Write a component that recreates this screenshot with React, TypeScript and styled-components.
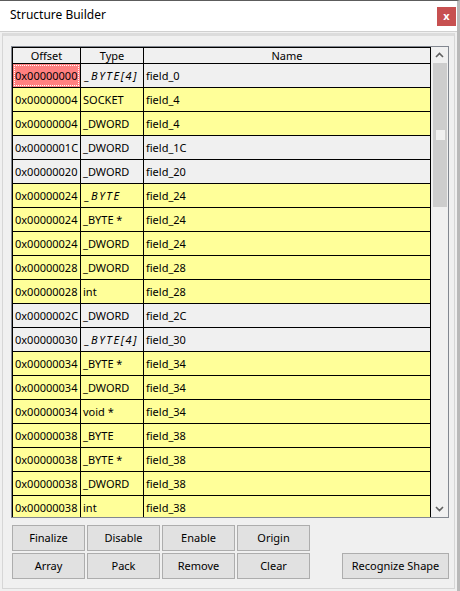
import React from "react";
import styled, { createGlobalStyle } from "styled-components";

const Global = createGlobalStyle`
  html, body { margin: 0; padding: 0; background: #f0f0f0; }
  body { font-family: "Noto Sans", "Segoe UI", sans-serif; font-size: 11px; color: #000; }
  * { box-sizing: border-box; }
`;

const Window = styled.div`
  width: 460px;
  height: 591px;
  display: flex;
  flex-direction: column;
  border-top: 1px solid #5c5c5c;
  border-right: 3px solid #b9b9b9;
  background: #f0f0f0;
  overflow: hidden;
`;

const TitleBar = styled.div`
  height: 31px;
  flex: none;
  background: #fff;
  display: flex;
  align-items: center;
  justify-content: space-between;
  padding: 0 1px 0 10px;
  font-size: 12px;
  border-bottom: 1px solid #d0d0d0;
`;

const Title = styled.span`
  margin-top: -3px;
`;

const CloseButton = styled.div`
  width: 19px;
  height: 19px;
  background: #c75050;
  color: #fff;
  font-weight: bold;
  font-size: 11px;
  display: flex;
  align-items: center;
  justify-content: center;
  margin-top: 1px;
  line-height: 1;
  padding-bottom: 2px;
`;

const Panel = styled.div`
  flex: 1;
  margin: 1px 2px 2px 2px;
  border: 1px solid #d6d6d6;
  border-top: 3px solid #dcdcdc;
  padding: 10px 4px 0 8px;
  display: flex;
  flex-direction: column;
  gap: 7px;
`;

const Frame = styled.div`
  width: 438px;
  height: 472px;
  border: 1px solid #828790;
  display: flex;
  background: #f0f0f0;
`;

const Grid = styled.div`
  flex: 1;
  border-left: 1px solid #000;
  border-top: 1px solid #000;
  overflow: hidden;
  display: flex;
  flex-direction: column;
`;

const Row = styled.div<{ $bg: string; $h: number }>`
  display: grid;
  grid-template-columns: 68px 63px 1fr;
  height: ${(p) => p.$h}px;
  flex: none;
  background: ${(p) => p.$bg};
  border-bottom: 1px solid #000;
`;

const HeadCell = styled.div`
  border-right: 1px solid #000;
  display: flex;
  align-items: center;
  justify-content: center;
  padding-bottom: 1px;
`;

const Cell = styled.div<{ $sel?: boolean; $italic?: boolean }>`
  border-right: 1px solid #000;
  display: flex;
  align-items: center;
  padding-left: ${(p) => (p.$italic ? 4 : 2)}px;
  white-space: nowrap;
  overflow: hidden;
  position: relative;
  background: ${(p) => (p.$sel ? "#ff8080" : "transparent")};
  font-style: ${(p) => (p.$italic ? "italic" : "normal")};
  letter-spacing: ${(p) => (p.$italic ? "1.6px" : "0")};
  ${(p) =>
    p.$sel &&
    `&::after {
      content: "";
      position: absolute;
      inset: 1px;
      border: 1px dotted #fff;
    }`}
`;

const ScrollBar = styled.div`
  width: 17px;
  flex: none;
  display: flex;
  flex-direction: column;
  background: #f0f0f0;
`;

const Arrow = styled.div`
  height: 16px;
  flex: none;
  display: flex;
  align-items: center;
  justify-content: center;
`;

const Track = styled.div`
  flex: 1;
  display: flex;
  flex-direction: column;
  padding: 0 1px 0 2px;
`;

const Thumb = styled.div`
  height: 144px;
  background: #cdcdcd;
  display: flex;
  justify-content: center;
  padding-top: 67px;
`;

const Grip = styled.div`
  width: 9px;
  height: 10px;
  background: #f0f0f0;
`;

const Buttons = styled.div`
  display: grid;
  grid-template-columns: 73px 73px 73px 73px 1fr;
  grid-template-rows: 26px 26px;
  column-gap: 2px;
  row-gap: 2px;
  width: 438px;
  padding-left: 1px;
`;

const Button = styled.button<{ $wide?: boolean }>`
  font-family: inherit;
  font-size: 11px;
  color: #000;
  background: #e1e1e1;
  border: 1px solid #adadad;
  padding: 0 0 1px 0;
  margin: 0;
  ${(p) => p.$wide && `grid-column: 5; grid-row: 2; width: 107px; justify-self: end;`}
`;

type R = { off: string; type: string; name: string; y: boolean; it?: boolean };

const rows: R[] = [
  { off: "0x00000000", type: "_BYTE[4]", name: "field_0", y: false, it: true },
  { off: "0x00000004", type: "SOCKET", name: "field_4", y: true },
  { off: "0x00000004", type: "_DWORD", name: "field_4", y: true },
  { off: "0x0000001C", type: "_DWORD", name: "field_1C", y: false },
  { off: "0x00000020", type: "_DWORD", name: "field_20", y: false },
  { off: "0x00000024", type: "_BYTE", name: "field_24", y: true, it: true },
  { off: "0x00000024", type: "_BYTE *", name: "field_24", y: true },
  { off: "0x00000024", type: "_DWORD", name: "field_24", y: true },
  { off: "0x00000028", type: "_DWORD", name: "field_28", y: true },
  { off: "0x00000028", type: "int", name: "field_28", y: true },
  { off: "0x0000002C", type: "_DWORD", name: "field_2C", y: false },
  { off: "0x00000030", type: "_BYTE[4]", name: "field_30", y: false, it: true },
  { off: "0x00000034", type: "_BYTE *", name: "field_34", y: true },
  { off: "0x00000034", type: "_DWORD", name: "field_34", y: true },
  { off: "0x00000034", type: "void *", name: "field_34", y: true },
  { off: "0x00000038", type: "_BYTE", name: "field_38", y: true },
  { off: "0x00000038", type: "_BYTE *", name: "field_38", y: true },
  { off: "0x00000038", type: "_DWORD", name: "field_38", y: true },
  { off: "0x00000038", type: "int", name: "field_38", y: true },
];

const Chevron = ({ up }: { up?: boolean }) => (
  <svg width="9" height="6" viewBox="0 0 9 6">
    <path
      d={up ? "M1 5 L4.5 1.5 L8 5" : "M1 1 L4.5 4.5 L8 1"}
      stroke="#606060"
      strokeWidth="1.6"
      fill="none"
    />
  </svg>
);

export default function App() {
  return (
    <Window>
      <Global />
      <TitleBar>
        <Title>Structure Builder</Title>
        <CloseButton>x</CloseButton>
      </TitleBar>
      <Panel>
        <Frame>
          <Grid>
            <Row $bg="#f0f0f0" $h={16}>
              <HeadCell>Offset</HeadCell>
              <HeadCell>Type</HeadCell>
              <HeadCell>Name</HeadCell>
            </Row>
            {rows.map((r, i) => (
              <Row key={i} $bg={r.y ? "#ffff99" : "#f0f0f0"} $h={24}>
                <Cell $sel={i === 0}>{r.off}</Cell>
                <Cell $italic={r.it}>{r.type}</Cell>
                <Cell>{r.name}</Cell>
              </Row>
            ))}
          </Grid>
          <ScrollBar>
            <Arrow>
              <Chevron up />
            </Arrow>
            <Track>
              <Thumb>
                <Grip />
              </Thumb>
            </Track>
            <Arrow>
              <Chevron />
            </Arrow>
          </ScrollBar>
        </Frame>
        <Buttons>
          <Button>Finalize</Button>
          <Button>Disable</Button>
          <Button>Enable</Button>
          <Button>Origin</Button>
          <span />
          <Button>Array</Button>
          <Button>Pack</Button>
          <Button>Remove</Button>
          <Button>Clear</Button>
          <Button $wide>Recognize Shape</Button>
        </Buttons>
      </Panel>
    </Window>
  );
}
